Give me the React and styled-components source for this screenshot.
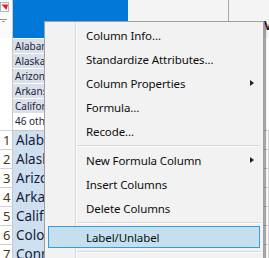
import React from 'react'
import styled, { createGlobalStyle } from 'styled-components'

const GlobalStyle = createGlobalStyle`
  html, body { margin: 0; padding: 0; background: #fff; }
  body { font-family: "Noto Sans", "Open Sans", sans-serif; }
`

const Page = styled.div`
  position: relative;
  width: 269px;
  height: 258px;
  overflow: hidden;
  background: #fff;
`

const Sheet = styled.div`
  display: grid;
  grid-template-columns: 13px 115px 101px 40px;
  grid-template-rows: 38px 93px repeat(7, 19px);
`

const Corner = styled.div`
  border-right: 1px solid #c8c8c8;
  background: #fafafa;
  svg { display: block; }
`

const BlueHead = styled.div`
  background: #0078d7;
`

const GreyHead = styled.div`
  background: #f4f4f4;
  border-right: ${p => (p.$line ? '1px solid #a8a8a8' : 'none')};
  display: flex;
  align-items: flex-end;
  padding: 0 0 4px ${p => p.$pad || 0}px;
  font-size: 12px;
  font-weight: 700;
  color: #1a1a2e;
  overflow: hidden;
  white-space: nowrap;
`

const Blank = styled.div`
  background: #fff;
  border-right: ${p => (p.$line ? '1px solid #c8c8c8' : 'none')};
  border-bottom: 1px solid #d4d4d4;
`

const Summary = styled.div`
  display: flex;
  flex-direction: column;
  border-bottom: 1px solid #c8c8c8;
  padding-top: 1px;
  overflow: hidden;
`

const SumRow = styled.div`
  height: 14px;
  border-bottom: 1px solid #fff;
  background: ${p => (p.$plain ? '#fff' : '#d9e0e9')};
  font-size: 10px;
  line-height: 14px;
  padding-left: 2px;
  color: #1e1e3c;
  white-space: nowrap;
  overflow: hidden;
  flex: ${p => (p.$plain ? 1 : 'none')};
`

const NumCell = styled.div`
  border-right: 1px solid #c8c8c8;
  border-bottom: 1px solid #d0d0d0;
  font-size: 13px;
  line-height: 18px;
  padding-left: 3px;
  color: #4a3514;
`

const StateCell = styled.div`
  background: #cde0f1;
  border-bottom: 1px solid #d6dde6;
  border-right: 1px solid #d6dde6;
  font-size: 13.5px;
  line-height: 18px;
  padding-left: 3px;
  color: #1a1a3a;
  white-space: nowrap;
  overflow: hidden;
`

const Cell = styled.div`
  background: #fff;
  border-bottom: 1px solid #d4d4d4;
  border-right: 1px solid #d4d4d4;
`

const Menu = styled.ul`
  position: absolute;
  left: 44px;
  top: 21px;
  width: 218px;
  height: 250px;
  margin: 0;
  padding: 1px 0 0;
  list-style: none;
  display: flex;
  flex-direction: column;
  border: 1px solid #a0a0a0;
  background:
    linear-gradient(to right, transparent 30px, #d9d9d9 30px, #d9d9d9 31px, #fcfcfc 31px, #fcfcfc 32px, transparent 32px),
    #f2f2f2;
  box-shadow: 2px 2px 1px rgba(0, 0, 0, 0.35);
  font-family: "Noto Sans", "Open Sans", sans-serif;
  font-size: 11.5px;
  letter-spacing: -0.1px;
  color: #0e0e0e;
`

const Item = styled.li`
  position: relative;
  box-sizing: border-box;
  flex: none;
  height: 22px;
  margin: 1px 3px;
  padding-left: 37px;
  display: flex;
  align-items: center;
  border: 1px solid ${p => (p.$active ? '#3a9bdc' : 'transparent')};
  background: ${p => (p.$active ? '#c4e0ef' : 'transparent')};
  white-space: nowrap;
`

const Arrow = styled.span`
  position: absolute;
  right: 5px;
  top: 7px;
  width: 0;
  height: 0;
  border-top: 3.5px solid transparent;
  border-bottom: 3.5px solid transparent;
  border-left: 4px solid #222;
`

const Sep = styled.li`
  flex: none;
  height: 5px;
  margin: 0 3px 0 32px;
  display: flex;
  flex-direction: column;
  justify-content: center;
  &::before {
    content: '';
    display: block;
    height: 1px;
    background: #d7d7d7;
  }
  &::after {
    content: '';
    display: block;
    height: 1px;
    background: #fdfdfd;
  }
`

const summary = ['Alabama', 'Alaska', 'Arizona', 'Arkansas', 'California']
const states = ['Alabama', 'Alaska', 'Arizona', 'Arkansas', 'California', 'Colorado', 'Connecticut']

const menu = [
  { label: 'Column Info...' },
  { label: 'Standardize Attributes...' },
  { label: 'Column Properties', sub: true },
  { label: 'Formula...' },
  { label: 'Recode...' },
  { sep: true },
  { label: 'New Formula Column', sub: true },
  { label: 'Insert Columns' },
  { label: 'Delete Columns' },
  { sep: true },
  { label: 'Label/Unlabel', active: true },
  { sep: true },
]

const CornerIcon = () => (
  <svg width="12" height="38" viewBox="0 0 12 38">
    <rect x="0.5" y="2.5" width="8" height="9" fill="#fff" stroke="#b4b4b4" />
    <polygon points="1.5,4.5 8,4.5 6.5,10" fill="#e0201c" />
    <line x1="0" y1="19.5" x2="7" y2="19.5" stroke="#8a9a8a" />
    <line x1="2" y1="21.5" x2="5" y2="21.5" stroke="#9aa89a" />
  </svg>
)

const App = () => {
  return (
    <Page>
      <GlobalStyle />
      <Sheet>
        <Corner><CornerIcon /></Corner>
        <BlueHead />
        <GreyHead $line />
        <GreyHead $pad={35}>Votes</GreyHead>

        <Blank $line />
        <Summary>
          {summary.map(s => <SumRow key={s}>{s}</SumRow>)}
          <SumRow $plain>46 others</SumRow>
        </Summary>
        <Blank $line />
        <Blank />

        {states.map((s, i) => (
          <React.Fragment key={s}>
            <NumCell>{i + 1}</NumCell>
            <StateCell>{s}</StateCell>
            <Cell />
            <Cell />
          </React.Fragment>
        ))}
      </Sheet>

      <Menu>
        {menu.map((m, i) =>
          m.sep ? (
            <Sep key={i} />
          ) : (
            <Item key={i} $active={m.active}>
              {m.label}
              {m.sub && <Arrow />}
            </Item>
          )
        )}
      </Menu>
    </Page>
  )
}

export default App
